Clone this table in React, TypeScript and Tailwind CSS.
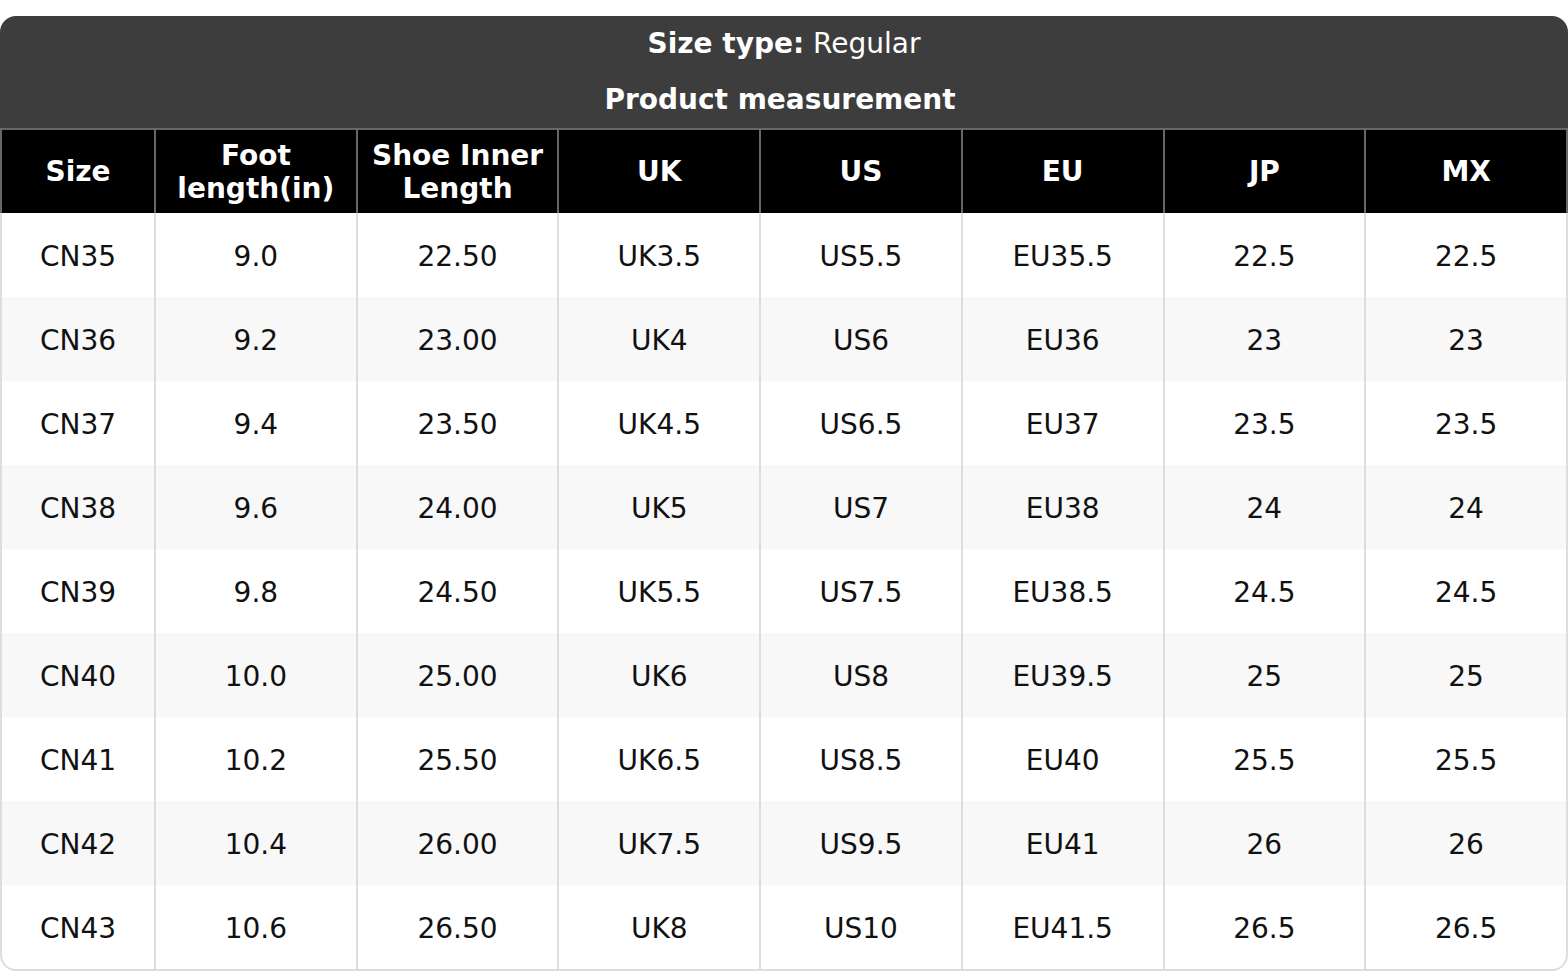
const columns = ["Size", "Foot\nlength(in)", "Shoe Inner\nLength", "UK", "US", "EU", "JP", "MX"];

const rows = [
  ["CN35", "9.0", "22.50", "UK3.5", "US5.5", "EU35.5", "22.5", "22.5"],
  ["CN36", "9.2", "23.00", "UK4", "US6", "EU36", "23", "23"],
  ["CN37", "9.4", "23.50", "UK4.5", "US6.5", "EU37", "23.5", "23.5"],
  ["CN38", "9.6", "24.00", "UK5", "US7", "EU38", "24", "24"],
  ["CN39", "9.8", "24.50", "UK5.5", "US7.5", "EU38.5", "24.5", "24.5"],
  ["CN40", "10.0", "25.00", "UK6", "US8", "EU39.5", "25", "25"],
  ["CN41", "10.2", "25.50", "UK6.5", "US8.5", "EU40", "25.5", "25.5"],
  ["CN42", "10.4", "26.00", "UK7.5", "US9.5", "EU41", "26", "26"],
  ["CN43", "10.6", "26.50", "UK8", "US10", "EU41.5", "26.5", "26.5"],
];

export default function App() {
  return (
    <div className="min-h-screen bg-white pt-4 font-['DejaVu_Sans',sans-serif] text-[28px]">
      <div className="rounded-t-2xl overflow-hidden">
        {/* Title block */}
        <div className="bg-[#3d3d3d] text-white">
          <div className="h-[56px] flex items-center justify-center">
            <span className="font-bold">Size type:</span>
            <span className="ml-[0.32em]">Regular</span>
          </div>
          <div className="h-[56px] flex items-center justify-center pr-[8px] font-bold">
            Product measurement
          </div>
        </div>

        <table className="w-full table-fixed border-separate border-spacing-0">
          <colgroup>
            <col className="w-[156px]" />
            <col />
            <col />
            <col />
            <col />
            <col />
            <col />
            <col />
          </colgroup>
          <thead>
            <tr>
              {columns.map((c, i) => (
                <th
                  key={c}
                  className={`h-[85px] bg-black text-white font-bold leading-[33px] whitespace-pre-line border-t-2 border-r-2 border-[#666] ${i === 0 ? "border-l-2" : ""}`}
                >
                  {c}
                </th>
              ))}
            </tr>
          </thead>
          <tbody>
            {rows.map((r, ri) => {
              const last = ri === rows.length - 1;
              return (
                <tr key={r[0]} className={ri % 2 === 1 ? "bg-[#f8f8f8]" : "bg-white"}>
                  {r.map((v, ci) => (
                    <td
                      key={ci}
                      className={`pt-[3px] text-center text-[#111] border-r-2 border-[#dddddd] ${ci === 0 ? "border-l-2" : ""} ${last ? "h-[86px] border-b-2" : "h-[84px]"} ${last && ci === 0 ? "rounded-bl-2xl" : ""} ${last && ci === r.length - 1 ? "rounded-br-2xl" : ""}`}
                    >
                      {v}
                    </td>
                  ))}
                </tr>
              );
            })}
          </tbody>
        </table>
      </div>
    </div>
  );
}
